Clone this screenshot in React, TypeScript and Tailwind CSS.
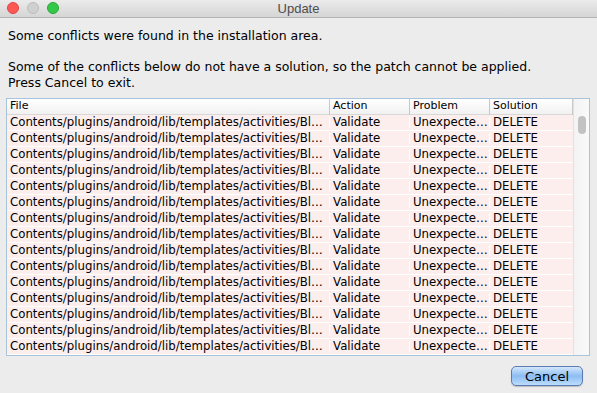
import React from 'react';

const rows = Array.from({ length: 15 });

const App: React.FC = () => {
  return (
    <div className="w-[597px] h-[393px] bg-[#ececec] flex flex-col overflow-hidden font-['DejaVu_Sans',sans-serif] text-black">
      {/* TITLE BAR */}
      <div className="h-[18px] relative flex items-center justify-center bg-gradient-to-b from-[#ebebeb] to-[#d5d5d5] border-b border-[#b4b4b4]">
        <div className="absolute left-[7px] top-[2px] flex gap-[8px]">
          <span className="w-[12px] h-[12px] rounded-full bg-[#fc5753] border border-[#df4744]" />
          <span className="w-[12px] h-[12px] rounded-full bg-[#d0d0d0] border border-[#bcbcbc]" />
          <span className="w-[12px] h-[12px] rounded-full bg-[#34c84a] border border-[#27aa35]" />
        </div>
        <span className="text-[13px] text-[#4d4d4d] font-['Liberation_Sans',sans-serif] leading-none">Update</span>
      </div>

      {/* MESSAGE */}
      <div className="px-[8px] pt-[10px] text-[12.5px] leading-[16px]">
        <p>Some conflicts were found in the installation area.</p>
        <p className="mt-[15px]">Some of the conflicts below do not have a solution, so the patch cannot be applied.</p>
        <p>Press Cancel to exit.</p>
      </div>

      {/* TABLE */}
      <div className="mx-[6px] mt-[7px] w-[584px] border border-[#a8c4dc] bg-white flex text-[11.75px]">
        <div className="w-[566px] flex flex-col">
          <div className="h-[16px] flex items-center bg-gradient-to-b from-white to-[#f1f1f1] border-b border-[#d8d8d8] text-[11px]">
            <div className="w-[322px] pl-[3px]">File</div>
            <div className="w-[80px] pl-[3px] border-l border-[#c8c8c8]">Action</div>
            <div className="w-[80px] pl-[3px] border-l border-[#c8c8c8]">Problem</div>
            <div className="w-[84px] pl-[3px] border-l border-[#c8c8c8] border-r">Solution</div>
          </div>
          {rows.map((_, i) => (
            <div key={i} className="h-[16px] flex items-center bg-[#fdeeee] border-b border-white leading-none">
              <div className="w-[322px] pl-[3px] whitespace-nowrap">Contents/plugins/android/lib/templates/activities/Bl…</div>
              <div className="w-[80px] pl-[3px] border-l border-white whitespace-nowrap">Validate</div>
              <div className="w-[80px] pl-[3px] border-l border-white whitespace-nowrap">Unexpecte…</div>
              <div className="w-[84px] pl-[3px] border-l border-white whitespace-nowrap">DELETE</div>
            </div>
          ))}
        </div>
        {/* SCROLLBAR */}
        <div className="flex-1 bg-gradient-to-r from-[#f3f3f3] to-[#fafafa] border-l border-[#e2e2e2] flex justify-center pt-[17px]">
          <div className="w-[8px] h-[18px] rounded-full bg-[#c2c2c2]" />
        </div>
      </div>

      {/* FOOTER */}
      <div className="flex justify-end pr-[14px] pt-[10px]">
        <button className="w-[72px] h-[20px] rounded-[5px] border border-[#5a7cb3] bg-gradient-to-b from-[#d4e6fb] via-[#8dbdf2] to-[#bcdcfb] text-[13px] leading-none shadow-[0_1px_1px_rgba(0,0,0,0.2)]">
          Cancel
        </button>
      </div>
    </div>
  );
};

export default App;
